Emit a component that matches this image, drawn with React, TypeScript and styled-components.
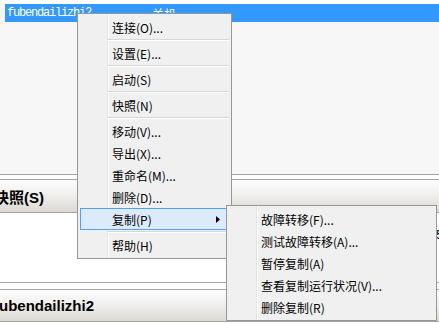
import React, {FunctionComponent} from 'react';
import styled, {createGlobalStyle} from 'styled-components';

const GlobalStyle = createGlobalStyle`
    html, body {
        margin: 0;
        padding: 0;
        background: #fff;
        overflow: hidden;
    }
    body {
        font-family: "Noto Sans CJK SC", "Noto Sans", sans-serif;
    }
`;

const ScreenStl = styled.div`
    position: relative;
    width: 439px;
    height: 324px;
    overflow: hidden;
    display: flex;
    flex-direction: column;
`;

const ListAreaStl = styled.div`
    box-sizing: border-box;
    height: 174px;
    border-top: 4px solid #fff;
    padding-left: 5px;
    background: #f7f7f7;
`;

const RowStl = styled.div<{$selected?: boolean}>`
    display: flex;
    align-items: center;
    height: 18px;
    padding-left: 2px;
    background: ${p => p.$selected ? '#3399ff' : 'transparent'};
    color: ${p => p.$selected ? '#fff' : '#000'};
`;

const NameCellStl = styled.span`
    width: 145px;
    font-family: "Liberation Mono", monospace;
    font-size: 12px;
    letter-spacing: -1.2px;
    white-space: nowrap;
`;

const StateCellStl = styled.span`
    font-size: 12px;
`;

const SplitterStl = styled.div<{$gap: number}>`
    height: ${p => p.$gap}px;
    border-top: 1px solid #a3a3a3;
    background: #fff;
`;

const SectionHeaderStl = styled.div<{$height: number}>`
    display: flex;
    align-items: center;
    height: ${p => p.$height}px;
    border-top: 1px solid #a3a3a3;
    border-bottom: 1px solid #a3a3a3;
    background: linear-gradient(to bottom, #fdfdfd 0%, #f1f0ee 45%, #dcd9d3 100%);
    overflow: hidden;
`;

const SectionTitleStl = styled.span`
    margin-left: -6px;
    font-family: "Liberation Sans", "Noto Sans CJK SC", sans-serif;
    font-size: 15px;
    font-weight: bold;
    color: #000;
    white-space: nowrap;
`;

const ContentStl = styled.div`
    height: 69px;
    background: #fff;
    padding-top: 16px;
    box-sizing: border-box;
`;

const ContentTextStl = styled.div`
    padding-left: 436px;
    font-family: "Liberation Mono", monospace;
    font-size: 12px;
    white-space: nowrap;
`;

const MenuStl = styled.div<{$left: number; $top: number; $width: number}>`
    position: absolute;
    left: ${p => p.$left}px;
    top: ${p => p.$top}px;
    width: ${p => p.$width}px;
    box-sizing: border-box;
    padding: 2px;
    border: 1px solid #979797;
    background-color: #f0f0f0;
    background-image: linear-gradient(to right,
        transparent 29px, #e2e3e3 29px, #e2e3e3 30px,
        #fff 30px, #fff 31px, transparent 31px);
    font-size: 12px;
    color: #000;
`;

const MenuItemStl = styled.div<{$active?: boolean}>`
    position: relative;
    display: flex;
    align-items: center;
    justify-content: space-between;
    box-sizing: border-box;
    height: 22px;
    padding: 0 8px 0 31px;
    border: 1px solid ${p => p.$active ? '#4fa3f0' : 'transparent'};
    background: ${p => p.$active ? '#dcebfc' : 'transparent'};
    white-space: nowrap;
`;

const MenuSeparatorStl = styled.div`
    height: 4px;
    margin-left: 27px;
    background: linear-gradient(to bottom,
        transparent 1px, #d7d7d7 1px, #d7d7d7 2px,
        #fff 2px, #fff 3px, transparent 3px);
`;

type MenuEntry = {label?: string; sep?: boolean; active?: boolean; sub?: boolean};

const mainMenu: MenuEntry[] = [
    {label: '连接(O)...'},
    {sep: true},
    {label: '设置(E)...'},
    {sep: true},
    {label: '启动(S)'},
    {sep: true},
    {label: '快照(N)'},
    {sep: true},
    {label: '移动(V)...'},
    {label: '导出(X)...'},
    {label: '重命名(M)...'},
    {label: '删除(D)...'},
    {label: '复制(P)', active: true, sub: true},
    {sep: true},
    {label: '帮助(H)'},
];

const replicaMenu: MenuEntry[] = [
    {label: '故障转移(F)...'},
    {label: '测试故障转移(A)...'},
    {label: '暂停复制(A)'},
    {label: '查看复制运行状况(V)...'},
    {label: '删除复制(R)'},
];

const SubArrow = () => (
    <svg width="4" height="7" viewBox="0 0 4 7">
        <path d="M0 0 L4 3.5 L0 7 Z" fill="#000"/>
    </svg>
);

const ContextMenu: FunctionComponent<{items: MenuEntry[]; left: number; top: number; width: number}> =
    ({items, left, top, width}) => (
        <MenuStl $left={left} $top={top} $width={width}>
            {items.map((it, i) => it.sep
                ? <MenuSeparatorStl key={i}/>
                : (
                    <MenuItemStl key={i} $active={it.active}>
                        <span>{it.label}</span>
                        {it.sub && <SubArrow/>}
                    </MenuItemStl>
                ))}
        </MenuStl>
    );

const App: FunctionComponent<{}> = () => {
    return (
        <ScreenStl>
            <GlobalStyle/>
            <ListAreaStl>
                <RowStl $selected>
                    <NameCellStl>{"fubendailizhi2"}</NameCellStl>
                    <StateCellStl>{"关机"}</StateCellStl>
                </RowStl>
            </ListAreaStl>
            <SplitterStl $gap={4}/>
            <SectionHeaderStl $height={32}>
                <SectionTitleStl>{"快照(S)"}</SectionTitleStl>
            </SectionHeaderStl>
            <ContentStl>
                <ContentTextStl>{"5"}</ContentTextStl>
            </ContentStl>
            <SplitterStl $gap={6}/>
            <SectionHeaderStl $height={31}>
                <SectionTitleStl>{"fubendailizhi2"}</SectionTitleStl>
            </SectionHeaderStl>

            <ContextMenu items={mainMenu} left={77} top={13} width={155}/>
            <ContextMenu items={replicaMenu} left={226} top={205} width={211}/>
        </ScreenStl>
    )
};

export default App;
